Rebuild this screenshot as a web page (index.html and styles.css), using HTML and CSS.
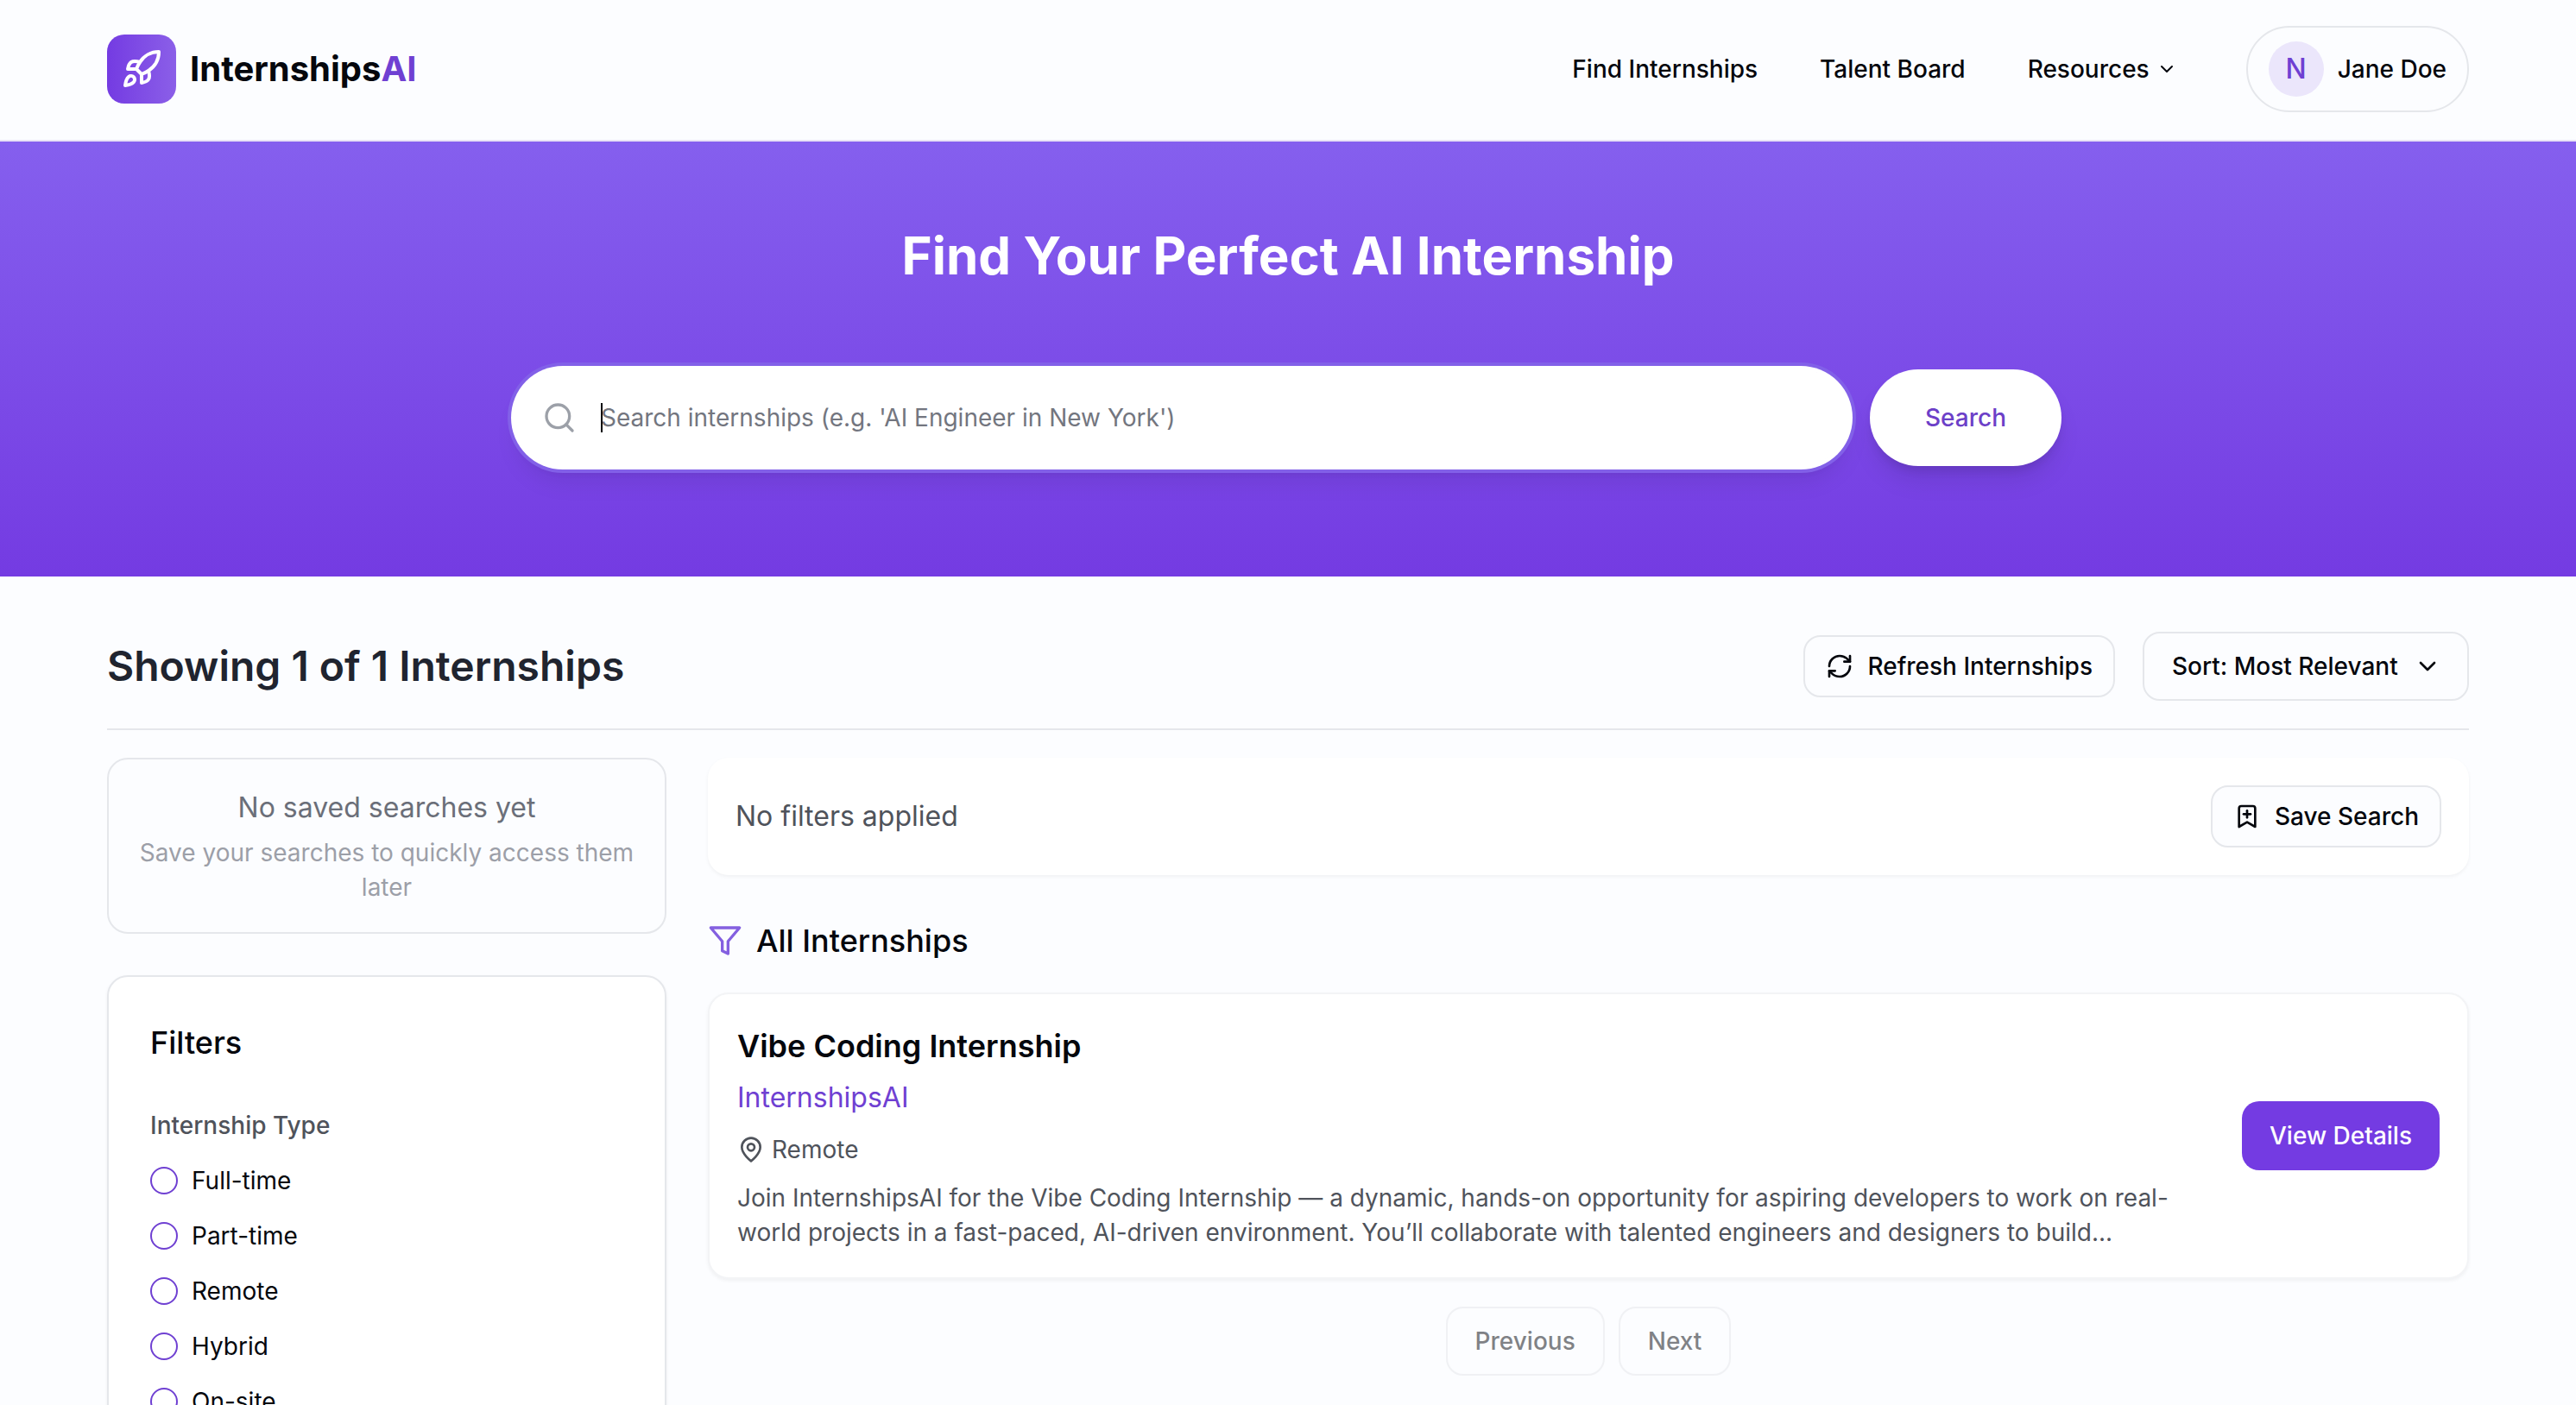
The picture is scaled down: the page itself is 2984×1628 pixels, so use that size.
FILE: index.html
```html
<!DOCTYPE html>
<html lang="en">
<head>
  <meta charset="utf-8">
  <meta name="viewport" content="width=device-width, initial-scale=1">
  <title>InternshipsAI – Find Internships</title>
  <link rel="stylesheet" href="styles.css">
</head>
<body>
  <header class="site-header">
    <div class="container header-row">
      <a class="brand" href="#">
        <span class="brand-mark">
          <svg class="icon icon-lg" viewBox="0 0 24 24" aria-hidden="true"><path d="M4.5 16.5c-1.5 1.26-2 5-2 5s3.74-.5 5-2c.71-.84.7-2.13-.09-2.91a2.18 2.18 0 0 0-2.91-.09z"/><path d="m12 15-3-3a22 22 0 0 1 2-3.95A12.88 12.88 0 0 1 22 2c0 2.72-.78 7.5-6 11a22.35 22.35 0 0 1-4 2z"/><path d="M9 12H4s.55-3.03 2-4c1.62-1.08 5 0 5 0"/><path d="M12 15v5s3.03-.55 4-2c1.08-1.62 0-5 0-5"/></svg>
        </span>
        <span class="brand-name">Internships<span class="brand-accent">AI</span></span>
      </a>
      <nav class="nav" aria-label="Main">
        <a class="nav-link" href="#">Find Internships</a>
        <a class="nav-link" href="#">Talent Board</a>
        <button class="nav-link nav-menu" type="button">Resources
          <svg class="icon icon-xs" viewBox="0 0 24 24" aria-hidden="true"><path d="m6 9 6 6 6-6"/></svg>
        </button>
        <button class="user-pill" type="button"><span class="avatar">N</span>Jane Doe</button>
      </nav>
    </div>
  </header>

  <section class="hero">
    <h1 class="hero-title">Find Your Perfect AI Internship</h1>
    <form class="search-form">
      <div class="search-field">
        <svg class="icon icon-md search-icon" viewBox="0 0 24 24" aria-hidden="true"><circle cx="11" cy="11" r="8"/><path d="m21 21-4.3-4.3"/></svg>
        <input class="search-input" type="text" aria-label="Search internships" placeholder="Search internships (e.g. 'AI Engineer in New York')">
        <span class="search-caret"></span>
      </div>
      <button class="search-button" type="button">Search</button>
    </form>
  </section>

  <main class="container main">
    <div class="results-bar">
      <h2 class="results-title">Showing 1 of 1 Internships</h2>
      <div class="results-actions">
        <button class="btn btn-small" type="button">
          <svg class="icon icon-sm" viewBox="0 0 24 24" aria-hidden="true"><path d="M3 12a9 9 0 0 1 9-9 9.75 9.75 0 0 1 6.74 2.74L21 8"/><path d="M21 3v5h-5"/><path d="M21 12a9 9 0 0 1-9 9 9.75 9.75 0 0 1-6.74-2.74L3 16"/><path d="M8 16H3v5"/></svg>
          Refresh Internships
        </button>
        <div class="sort">
          <select class="btn sort-select" aria-label="Sort internships">
            <option>Sort: Most Relevant</option>
          </select>
          <svg class="icon icon-sm sort-chevron" viewBox="0 0 24 24" aria-hidden="true"><path d="m6 9 6 6 6-6"/></svg>
        </div>
      </div>
    </div>

    <div class="layout">
      <aside class="sidebar">
        <section class="saved">
          <p class="saved-title">No saved searches yet</p>
          <p class="saved-hint">Save your searches to quickly access them later</p>
        </section>
        <section class="filters">
          <h3 class="heading">Filters</h3>
          <fieldset class="filter-group">
            <legend class="filter-legend">Internship Type</legend>
            <label class="option"><input class="radio" type="radio" name="type">Full-time</label>
            <label class="option"><input class="radio" type="radio" name="type">Part-time</label>
            <label class="option"><input class="radio" type="radio" name="type">Remote</label>
            <label class="option"><input class="radio" type="radio" name="type">Hybrid</label>
            <label class="option"><input class="radio" type="radio" name="type">On-site</label>
          </fieldset>
        </section>
      </aside>

      <div class="content">
        <div class="applied">
          <p class="applied-text">No filters applied</p>
          <button class="btn btn-small" type="button">
            <svg class="icon icon-sm" viewBox="0 0 24 24" aria-hidden="true"><path d="m19 21-7-4-7 4V5a2 2 0 0 1 2-2h10a2 2 0 0 1 2 2v16z"/><path d="M12 7v6"/><path d="M15 10H9"/></svg>
            Save Search
          </button>
        </div>

        <div class="list-heading">
          <svg class="icon icon-md list-icon" viewBox="0 0 24 24" aria-hidden="true"><path d="M22 3H2l8 9.46V19l4 2v-8.54L22 3z"/></svg>
          <h2 class="heading">All Internships</h2>
        </div>

        <article class="job">
          <div class="job-body">
            <h3 class="job-title">Vibe Coding Internship</h3>
            <p class="job-company">InternshipsAI</p>
            <p class="job-place">
              <svg class="icon icon-sm" viewBox="0 0 24 24" aria-hidden="true"><path d="M20 10c0 6-8 12-8 12s-8-6-8-12a8 8 0 0 1 16 0Z"/><circle cx="12" cy="10" r="3"/></svg>
              Remote
            </p>
            <p class="job-text">Join InternshipsAI for the Vibe Coding Internship — a dynamic, hands-on opportunity for aspiring developers to work on real-world projects in a fast-paced, AI-driven environment. You’ll collaborate with talented engineers and designers to build...</p>
          </div>
          <button class="btn-primary" type="button">View Details</button>
        </article>

        <nav class="pager" aria-label="Pages">
          <button class="btn" type="button" disabled>Previous</button>
          <button class="btn" type="button" disabled>Next</button>
        </nav>
      </div>
    </div>
  </main>
</body>
</html>
```

FILE: styles.css
```css
:root {
  --bg: #fcfdff;
  --ink: #05070d;
  --primary: #743be2;
  --primary-light: #855fee;
  --primary-text: #6f40d2;
  --line: #e5e7eb;
  --gray: #4f535b;
  --radius: 24px;
  --shadow: 0 2px 4px rgba(0, 0, 0, 0.05);
}

* {
  box-sizing: border-box;
}

html,
body {
  height: 100%;
}

body {
  margin: 0;
  overflow-y: auto;
  scrollbar-width: none;
  background: var(--bg);
  color: var(--ink);
  font: 400 28px/40px Inter, "Liberation Sans", sans-serif;
}

h1, h2, h3, p {
  margin: 0;
}

a {
  color: inherit;
  text-decoration: none;
}

button, input, select {
  font: inherit;
  color: inherit;
}

button {
  cursor: pointer;
}

.container {
  max-width: 2800px;
  margin: 0 auto;
  padding: 0 32px;
}

/* Icons */
.icon {
  flex: none;
  fill: none;
  stroke: currentColor;
  stroke-width: 2;
  stroke-linecap: round;
  stroke-linejoin: round;
}

.icon-xs { width: 24px; height: 24px; }
.icon-sm { width: 32px; height: 32px; }
.icon-md { width: 40px; height: 40px; }
.icon-lg { width: 48px; height: 48px; }

/* Header */
.site-header {
  padding: 30px 0 32px;
  border-bottom: 2px solid #e9e3f6;
}

.header-row,
.brand,
.nav {
  display: flex;
  align-items: center;
}

.header-row {
  justify-content: space-between;
}

.brand {
  gap: 16px;
}

.brand-mark {
  display: grid;
  place-items: center;
  width: 80px;
  height: 80px;
  border-radius: 20px;
  background: linear-gradient(90deg, var(--primary), #8b5fe8);
  color: #fff;
}

.brand-name {
  font-size: 40px;
  font-weight: 700;
}

.brand-accent {
  color: var(--primary-text);
}

.nav {
  gap: 72px;
}

.nav-link {
  font-weight: 500;
}

.nav-menu {
  display: flex;
  align-items: center;
  gap: 8px;
  padding: 0;
  border: 0;
  background: none;
}

.user-pill {
  display: flex;
  align-items: center;
  gap: 16px;
  height: 100px;
  margin-left: 8px;
  padding: 0 24px;
  border: 2px solid var(--line);
  border-radius: 50px;
  background: none;
  font-weight: 500;
}

.avatar {
  display: grid;
  place-items: center;
  width: 64px;
  height: 64px;
  border-radius: 50%;
  background: #ebe6fb;
  color: var(--primary-text);
  font-size: 32px;
}

/* Hero */
.hero {
  padding: 96px 32px 128px;
  background: linear-gradient(180deg, var(--primary-light), var(--primary));
}

.hero-title {
  margin-bottom: 96px;
  color: #fff;
  font-size: 60px;
  font-weight: 700;
  line-height: 72px;
  text-align: center;
}

.search-form {
  display: flex;
  gap: 24px;
  max-width: 1792px;
  margin: 0 auto;
}

.search-field {
  position: relative;
  flex: 1;
}

.search-input {
  display: block;
  width: 100%;
  height: 112px;
  padding: 0 100px;
  border: 0;
  border-radius: 56px;
  outline: 0;
  background: #fff;
  box-shadow: 0 0 0 4px #fff, 0 0 0 8px #8260e8, 0 20px 30px -6px rgba(0, 0, 0, 0.1), 0 8px 12px -4px rgba(0, 0, 0, 0.1);
}

.search-input::placeholder {
  color: #73767f;
  opacity: 1;
}

.search-icon {
  position: absolute;
  top: 36px;
  left: 32px;
  color: #9ca0a8;
}

.search-caret {
  position: absolute;
  top: 39px;
  left: 100px;
  width: 2px;
  height: 34px;
  background: var(--ink);
}

.search-button {
  padding: 0 64px;
  border: 0;
  border-radius: 56px;
  background: #fff;
  color: #6c40c8;
  font-weight: 500;
  box-shadow: 0 20px 30px -6px rgba(0, 0, 0, 0.1), 0 8px 12px -4px rgba(0, 0, 0, 0.1);
}

/* Buttons */
.btn {
  display: flex;
  align-items: center;
  gap: 16px;
  height: 80px;
  padding: 0 32px;
  border: 2px solid var(--line);
  border-radius: 20px;
  background: var(--bg);
  font-weight: 500;
}

.btn-small {
  height: 72px;
  padding: 0 24px;
}

.btn:disabled {
  color: var(--ink);
  opacity: 0.5;
}

.btn-primary {
  flex: none;
  height: 80px;
  padding: 0 32px;
  border: 0;
  border-radius: 20px;
  background: var(--primary);
  color: #fff;
  font-weight: 500;
}

/* Results bar */
.main {
  padding-top: 64px;
  padding-bottom: 64px;
}

.results-bar,
.results-actions {
  display: flex;
  align-items: center;
}

.results-bar {
  justify-content: space-between;
  margin-bottom: 32px;
  padding-bottom: 32px;
  border-bottom: 2px solid var(--line);
}

.results-actions {
  gap: 32px;
}

.results-title {
  color: #20242f;
  font-size: 48px;
  font-weight: 600;
  line-height: 64px;
}

.sort {
  position: relative;
}

.sort-select {
  padding-right: 80px;
  appearance: none;
}

.sort-chevron {
  position: absolute;
  top: 24px;
  right: 32px;
  pointer-events: none;
}

/* Two-column layout */
.layout {
  display: grid;
  grid-template-columns: repeat(4, minmax(0, 1fr));
  gap: 48px;
  align-items: start;
}

.content {
  grid-column: span 3;
}

.sidebar {
  display: grid;
  gap: 48px;
}

.saved {
  display: grid;
  gap: 8px;
  padding: 32px;
  border: 2px solid var(--line);
  border-radius: var(--radius);
  text-align: center;
}

.saved-title {
  color: #6b6f79;
  font-size: 32px;
  line-height: 48px;
}

.saved-hint {
  color: #9c9fa8;
}

.filters {
  padding: 48px;
  border: 2px solid var(--line);
  border-radius: var(--radius);
  background: #fff;
  box-shadow: var(--shadow);
}

.heading {
  font-size: 36px;
  font-weight: 500;
  line-height: 56px;
}

.filter-group {
  margin: 48px 0 0;
  padding: 0;
  border: 0;
}

.filter-legend {
  padding: 0;
  color: var(--gray);
  font-weight: 500;
}

.option {
  display: flex;
  align-items: center;
  gap: 16px;
  margin-top: 24px;
}

.radio {
  width: 32px;
  height: 32px;
  margin: 0;
  border: 2px solid var(--primary-text);
  border-radius: 50%;
  appearance: none;
}

.radio:checked {
  box-shadow: inset 0 0 0 6px #fff;
  background: var(--primary);
}

/* Content column */
.applied {
  display: flex;
  align-items: center;
  justify-content: space-between;
  padding: 32px;
  border-radius: var(--radius);
  background: #fff;
  box-shadow: var(--shadow);
}

.applied-text {
  color: var(--gray);
  font-size: 32px;
}

.list-heading {
  display: flex;
  align-items: center;
  gap: 16px;
  margin: 48px 0 32px;
}

.list-icon {
  color: #8460e0;
}

.job {
  display: flex;
  align-items: center;
  justify-content: space-between;
  gap: 32px;
  padding: 32px;
  border: 2px solid #f3f4f6;
  border-radius: var(--radius);
  background: #fff;
  box-shadow: var(--shadow);
}

.job-title {
  font-size: 36px;
  font-weight: 600;
  line-height: 56px;
}

.job-company {
  margin: 8px 0 16px;
  color: var(--primary-text);
  font-size: 32px;
  line-height: 48px;
}

.job-place {
  display: flex;
  align-items: center;
  gap: 8px;
  margin-bottom: 16px;
  color: var(--gray);
}

.job-text {
  color: var(--gray);
}

.pager {
  display: flex;
  justify-content: center;
  gap: 16px;
  margin-top: 32px;
}
```
